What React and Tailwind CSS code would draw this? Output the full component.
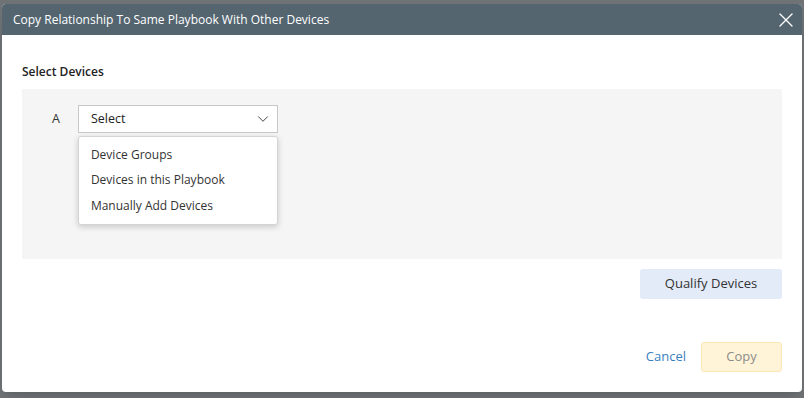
import React from "react";
import { ChevronDown, X } from "lucide-react";

const options = ["Device Groups", "Devices in this Playbook", "Manually Add Devices"];

export default function App() {
  return (
    <div className="w-[804px] h-[398px] bg-[#6f7375] pt-[4px] pl-[2px] overflow-hidden font-['Open_Sans',sans-serif]">
      {/* Dialog */}
      <div className="w-[800px] h-[388px] bg-white rounded-[4px] overflow-hidden flex flex-col shadow-lg">
        {/* Header */}
        <div className="h-[31px] bg-[#546570] flex items-center justify-between pl-[11px] pr-[4px]">
          <span className="text-[12px] text-white">Copy Relationship To Same Playbook With Other Devices</span>
          <X className="w-[24px] h-[24px] text-white" strokeWidth={1.3} />
        </div>

        {/* Body */}
        <div className="flex-1 px-[20px] pt-[29px]">
          <div className="text-[12px] font-semibold text-[#222] leading-[16px]">Select Devices</div>

          <div className="mt-[9px] h-[170px] bg-[#f5f5f5] pl-[30px] pt-[16px]">
            <div className="flex items-start gap-[18px]">
              <span className="text-[12.5px] text-[#333] leading-[28px]">A</span>
              <div className="relative w-[200px]">
                <div className="h-[28px] bg-white border border-[#c8c8c8] flex items-center justify-between pl-[12px] pr-[5px]">
                  <span className="text-[12.5px] text-[#222]">Select</span>
                  <ChevronDown className="w-[18px] h-[18px] text-[#444]" strokeWidth={1.3} />
                </div>
                <div className="absolute left-0 top-[31px] w-[200px] bg-white border border-[#d4d4d4] rounded-[3px] shadow-[0_2px_6px_rgba(0,0,0,0.18)] py-[5px]">
                  {options.map((o) => (
                    <div key={o} className="h-[25.5px] flex items-center pl-[12px] text-[12px] text-[#333]">
                      {o}
                    </div>
                  ))}
                </div>
              </div>
            </div>
          </div>

          <div className="flex justify-end mt-[10px]">
            <button className="w-[142px] h-[30px] rounded-[3px] bg-[#e3eaf8] text-[13px] text-[#333]">
              Qualify Devices
            </button>
          </div>

          <div className="flex justify-end items-center gap-[15px] mt-[43px]">
            <span className="text-[13px] text-[#3a7fc1]">Cancel</span>
            <button className="w-[81px] h-[30px] rounded-[3px] bg-[#fff4d7] border border-[#fbe7b3] text-[13px] text-[#8c8c8c]">
              Copy
            </button>
          </div>
        </div>
      </div>
    </div>
  );
}
